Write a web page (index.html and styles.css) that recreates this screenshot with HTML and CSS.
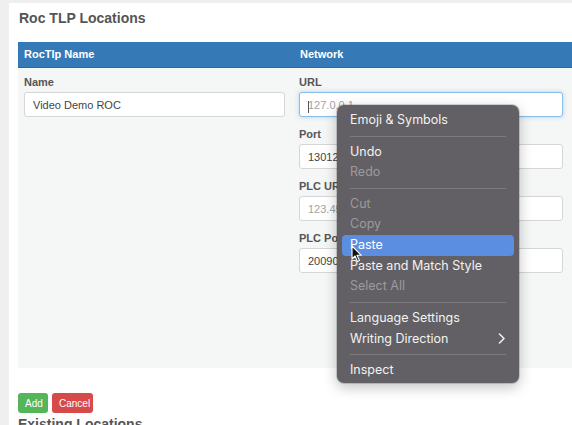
FILE: index.html
```html
<!DOCTYPE html>
<html lang="en">
<head>
    <meta charset="UTF-8">
    <title>Roc TLP Locations</title>
    <link rel="stylesheet" href="styles.css">
</head>
<body>
    <div class="page">
        <h3 class="title">Roc TLP Locations</h3>
        <div class="grid">
            <div class="head">RocTlp Name</div>
            <div class="head">Network</div>
            <div class="cell">
                <div class="field">
                    <label>Name</label>
                    <input class="box" type="text" value="Video Demo ROC">
                </div>
            </div>
            <div class="cell">
                <div class="field">
                    <label>URL</label>
                    <input class="box focus" type="text" placeholder="127.0.0.1">
                </div>
                <div class="field">
                    <label>Port</label>
                    <input class="box" type="text" value="13012">
                </div>
                <div class="field">
                    <label>PLC URL</label>
                    <input class="box" type="text" placeholder="123.45.67.89">
                </div>
                <div class="field">
                    <label>PLC Port</label>
                    <input class="box" type="text" value="20090">
                </div>
            </div>
        </div>
        <div class="actions">
            <button class="btn add">Add</button>
            <button class="btn cancel">Cancel</button>
        </div>
        <h3 class="sub">Existing Locations</h3>

        <div class="menu">
            <div class="item">Emoji &amp; Symbols</div>
            <div class="sep"></div>
            <div class="item">Undo</div>
            <div class="item off">Redo</div>
            <div class="sep"></div>
            <div class="item off">Cut</div>
            <div class="item off">Copy</div>
            <div class="item on">Paste</div>
            <div class="item">Paste and Match Style</div>
            <div class="item off">Select All</div>
            <div class="sep"></div>
            <div class="item">Language Settings</div>
            <div class="item more">Writing Direction
                <svg width="8" height="11" viewBox="0 0 8 11"><path d="M1.5 1 L6 5.5 L1.5 10" fill="none" stroke="#eee" stroke-width="1.6" stroke-linecap="round" stroke-linejoin="round"/></svg>
            </div>
            <div class="sep"></div>
            <div class="item">Inspect</div>
        </div>
        <span class="caret"></span>
        <svg class="cursor" width="12" height="18" viewBox="0 0 12 18"><path d="M1 1 L1 14 L4 11 L6.5 16.5 L8.5 15.6 L6 10.3 L10.3 10.3 Z" fill="#111" stroke="#fff" stroke-width="1.1" stroke-linejoin="round"/></svg>
    </div>
</body>
</html>
```

FILE: styles.css
```css
* { box-sizing: border-box; margin: 0; padding: 0; }
body {
    background: #efefef; font-family: "Liberation Sans", Arial, sans-serif;
    height: 425px; overflow: hidden;
}
.page {
    position: relative; margin: 3px 0 0 9px; background: #fff;
    height: 422px; padding: 0 0 0 9px;
}
.title { font-size: 14px; color: #555; font-weight: bold; padding: 7px 0 0 1px; height: 39px; }
.grid { display: grid; grid-template-columns: 276px 1fr; background: #f5f6f6; }
.head {
    background: #357ab6; color: #fff; font-size: 11px; font-weight: bold;
    height: 26px; line-height: 25px; padding-left: 6px; border-bottom: 1px solid #2d6795;
}
.cell { padding: 7px 9px 95px 6px; height: 300px; }
.cell + .cell { padding-left: 5px; }
.field { margin-bottom: 10px; }
.field label { display: block; font-size: 11px; font-weight: bold; color: #555; line-height: 14px; margin-bottom: 3px; }
.box {
    display: block; width: 100%; height: 25px; border: 1px solid #d6d6d6; border-radius: 3px;
    background: #fff; padding: 0 8px; font: 11px "Liberation Sans", Arial, sans-serif; color: #444;
}
.box::placeholder { color: #a3a3a3; }
.focus { border-color: #8cbde6; box-shadow: 0 0 4px rgba(102,175,233,0.5); }
.actions { display: flex; gap: 4px; margin-top: 25px; }
.btn {
    border: none; border-radius: 3px; color: #fff; font: 10px "Liberation Sans", Arial, sans-serif;
    height: 20px; padding: 0 7px;
}
.add { background: #55b55a; width: 30px; }
.cancel { background: #d64a4a; width: 41px; }
.sub { font-size: 14px; color: #555; margin-top: 3px; }

.menu {
    position: absolute; left: 328px; top: 102px; width: 182px; height: 278px;
    background: #626064; border-radius: 7px; padding: 5px 5px;
    box-shadow: 0 4px 14px rgba(0,0,0,0.25), 0 0 0 1px rgba(0,0,0,0.15);
    font-family: Inter, "Open Sans", sans-serif; font-size: 12.5px; color: #f2f2f2;
}
.item { height: 20.6px; line-height: 20px; padding-left: 8px; border-radius: 4px; }
.off { color: #9c9a9e; }
.on { background: #5b8ee0; color: #fff; }
.more { display: flex; justify-content: space-between; align-items: center; padding-right: 8px; }
.sep { height: 1px; background: #7d7b80; margin: 5px 8px 5px 8px; }
.caret { position: absolute; left: 299px; top: 98px; width: 1px; height: 12px; background: #555; }
.cursor { position: absolute; left: 342px; top: 242px; }
```
